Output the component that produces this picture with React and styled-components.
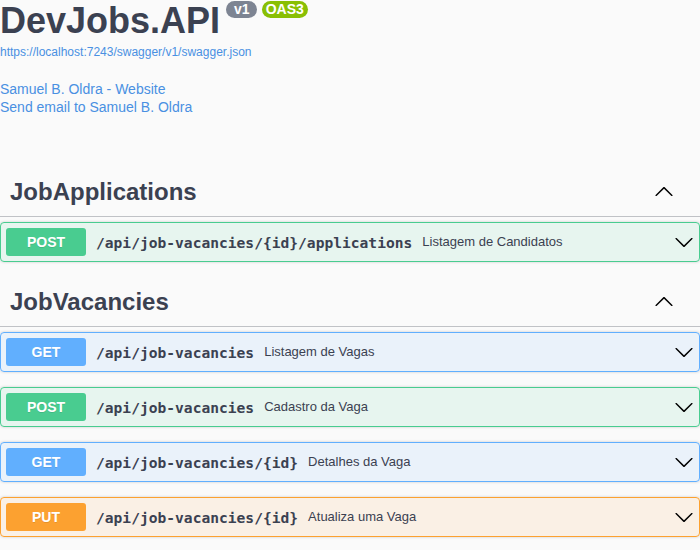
import React from "react";
import styled, { createGlobalStyle } from "styled-components";

const GlobalStyle = createGlobalStyle`
  html, body {
    margin: 0;
    padding: 0;
    background: #fafafa;
    font-family: "Liberation Sans", Arial, sans-serif;
    color: #3b4151;
  }
`;

const Page = styled.div`
  width: 700px;
`;

const Info = styled.div`
  margin: 0 0 51px;
`;

const TitleRow = styled.div`
  display: flex;
  align-items: flex-start;
`;

const Title = styled.h2`
  margin: 0;
  font-size: 36px;
  font-weight: 700;
  line-height: normal;
  color: #3b4151;
`;

const Badge = styled.span`
  margin: 1px 0 0 ${(p) => (p.$first ? 6 : 5)}px;
  height: 17px;
  line-height: 17px;
  padding: ${(p) => (p.$first ? "0 7px 0 8px" : "0 4px")};
  border-radius: 57px;
  background: ${(p) => p.$bg};
  color: #fff;
  font-size: 14px;
  font-weight: 700;
`;

const UrlLink = styled.a`
  display: block;
  margin-top: 3px;
  font-size: 12px;
  line-height: 14px;
  color: #4990e2;
  text-decoration: none;
`;

const Contact = styled.div`
  margin-top: 21px;
  display: flex;
  flex-direction: column;
`;

const ContactLink = styled.a`
  font-size: 14px;
  line-height: 18px;
  color: #4990e2;
  text-decoration: none;
`;

const TagSection = styled.section`
  display: flex;
  flex-direction: column;
`;

const TagHeader = styled.div`
  display: flex;
  align-items: center;
  padding: 10px 26px 10px 10px;
  border-bottom: 1px solid rgba(59, 65, 81, 0.3);
  margin: 0 0 5px;
`;

const TagTitle = styled.h3`
  flex: 1;
  margin: 0;
  font-size: 24px;
  font-weight: 700;
  line-height: 29px;
  color: #3b4151;
`;

const COLORS = {
  GET: { main: "#61affe", bg: "rgba(97,175,254,.1)" },
  POST: { main: "#49cc90", bg: "rgba(73,204,144,.1)" },
  PUT: { main: "#fca130", bg: "rgba(252,161,48,.1)" },
};

const Opblock = styled.div`
  margin: 0 0 15px;
  border: 1px solid ${(p) => COLORS[p.$method].main};
  border-radius: 4px;
  background: ${(p) => COLORS[p.$method].bg};
  box-shadow: 0 0 3px rgba(0, 0, 0, 0.19);
`;

const Summary = styled.div`
  display: flex;
  align-items: center;
  padding: 5px;
`;

const Method = styled.span`
  min-width: 80px;
  padding: 6px 0;
  border-radius: 3px;
  background: ${(p) => COLORS[p.$method].main};
  color: #fff;
  font-size: 14px;
  font-weight: 700;
  line-height: 16px;
  text-align: center;
  text-shadow: 0 1px 0 rgba(0, 0, 0, 0.1);
`;

const Path = styled.span`
  padding: 0 10px;
  font-family: "DejaVu Sans Mono", "Liberation Mono", monospace;
  font-size: 14.6px;
  font-weight: 700;
  color: #3b4151;
`;

const Desc = styled.span`
  flex: 1;
  font-size: 13px;
  line-height: 14px;
  margin-top: -1px;
  color: #3b4151;
`;

const ArrowSvg = styled.svg`
  width: 20px;
  height: 20px;
  flex: none;
  transform: ${(p) => (p.$up ? "rotate(180deg)" : "none")};
`;

const Arrow = ({ up }) => (
  <ArrowSvg $up={up} viewBox="0 0 20 20">
    <path
      fill="#000"
      d="M17.418 6.109c.272-.268.709-.268.979 0s.271.701 0 .969l-7.908 7.83c-.27.268-.707.268-.979 0l-7.908-7.83c-.27-.268-.27-.701 0-.969.271-.268.709-.268.979 0L10 13.25l7.418-7.141z"
    />
  </ArrowSvg>
);

const tags = [
  {
    name: "JobApplications",
    ops: [
      {
        method: "POST",
        path: "/api/job-vacancies/{id}/applications",
        desc: "Listagem de Candidatos",
      },
    ],
  },
  {
    name: "JobVacancies",
    ops: [
      { method: "GET", path: "/api/job-vacancies", desc: "Listagem de Vagas" },
      { method: "POST", path: "/api/job-vacancies", desc: "Cadastro da Vaga" },
      { method: "GET", path: "/api/job-vacancies/{id}", desc: "Detalhes da Vaga" },
      { method: "PUT", path: "/api/job-vacancies/{id}", desc: "Atualiza uma Vaga" },
    ],
  },
];

export default function App() {
  return (
    <Page>
      <GlobalStyle />
      <Info>
        <TitleRow>
          <Title>DevJobs.API</Title>
          <Badge $first $bg="#7d8492">v1</Badge>
          <Badge $bg="#89bf04">OAS3</Badge>
        </TitleRow>
        <UrlLink href="#">https://localhost:7243/swagger/v1/swagger.json</UrlLink>
        <Contact>
          <ContactLink href="#">Samuel B. Oldra - Website</ContactLink>
          <ContactLink href="#">Send email to Samuel B. Oldra</ContactLink>
        </Contact>
      </Info>
      {tags.map((t) => (
        <TagSection key={t.name}>
          <TagHeader>
            <TagTitle>{t.name}</TagTitle>
            <Arrow up />
          </TagHeader>
          {t.ops.map((o, i) => (
            <Opblock key={i} $method={o.method}>
              <Summary>
                <Method $method={o.method}>{o.method}</Method>
                <Path>{o.path}</Path>
                <Desc>{o.desc}</Desc>
                <Arrow />
              </Summary>
            </Opblock>
          ))}
        </TagSection>
      ))}
    </Page>
  );
}
